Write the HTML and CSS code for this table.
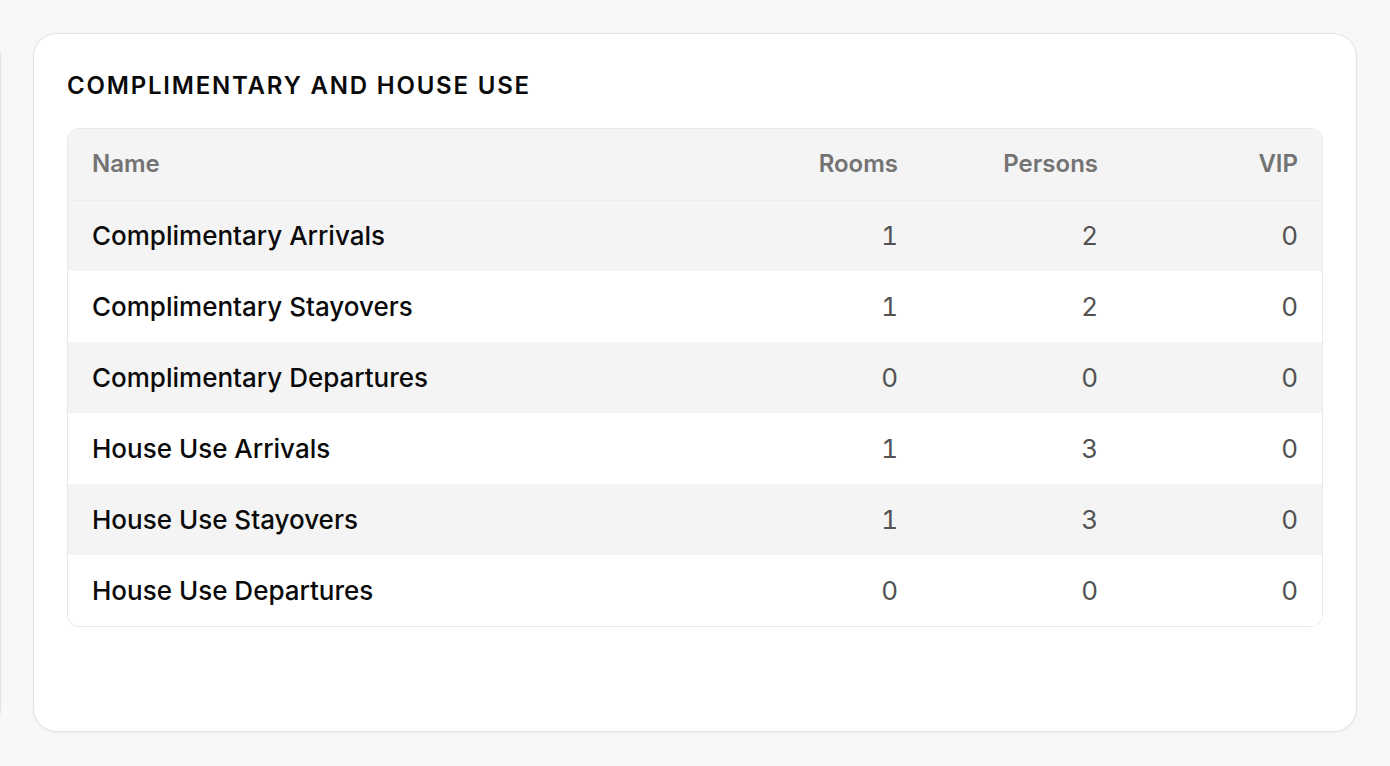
FILE: index.html
```html
<!DOCTYPE html>
<html lang="en">
<head>
<meta charset="utf-8">
<title>Complimentary and House Use</title>
<link rel="stylesheet" href="styles.css">
</head>
<body>
<div class="board">
  <div class="card card-prev" aria-hidden="true"></div>
  <section class="card">
    <h2 class="card-title">COMPLIMENTARY AND HOUSE USE</h2>
    <div class="table-wrap">
      <table class="stats">
        <colgroup>
          <col class="col-name">
          <col class="col-num">
          <col class="col-num">
          <col class="col-num">
        </colgroup>
        <thead>
          <tr>
            <th class="th-name">Name</th>
            <th class="num">Rooms</th>
            <th class="num">Persons</th>
            <th class="num">VIP</th>
          </tr>
        </thead>
        <tbody>
          <tr><td class="name">Complimentary Arrivals</td><td class="num">1</td><td class="num">2</td><td class="num">0</td></tr>
          <tr><td class="name">Complimentary Stayovers</td><td class="num">1</td><td class="num">2</td><td class="num">0</td></tr>
          <tr><td class="name">Complimentary Departures</td><td class="num">0</td><td class="num">0</td><td class="num">0</td></tr>
          <tr><td class="name">House Use Arrivals</td><td class="num">1</td><td class="num">3</td><td class="num">0</td></tr>
          <tr><td class="name">House Use Stayovers</td><td class="num">1</td><td class="num">3</td><td class="num">0</td></tr>
          <tr><td class="name">House Use Departures</td><td class="num">0</td><td class="num">0</td><td class="num">0</td></tr>
        </tbody>
      </table>
    </div>
  </section>
</div>
</body>
</html>
```
FILE: styles.css
```css
* { box-sizing: border-box; }

html, body {
  margin: 0;
  padding: 0;
  background: #f8f8f8;
  font-family: Inter, "Liberation Sans", sans-serif;
  color: #0a0a0a;
  overflow: hidden;
}

.board {
  display: flex;
  gap: 32px;
  padding-top: 33px;
  height: 766px;
}

.card {
  flex: 0 0 1324px;
  height: 699px;
  background: #fff;
  border: 1px solid #e4e4e4;
  border-radius: 24px;
  box-shadow: 0 1px 3px rgba(0, 0, 0, 0.05);
  padding: 36px 33px 32px;
}

.card-prev {
  flex: 0 0 200px;
  margin-left: -199px;
  padding: 0;
}

.card-title {
  margin: 0 0 26px;
  font-size: 24px;
  line-height: 32px;
  font-weight: 600;
  letter-spacing: 0.075em;
  color: #0a0a0a;
}

.table-wrap {
  border: 1px solid #e8e8e8;
  border-radius: 12px;
  overflow: hidden;
}

.stats {
  width: 100%;
  border-collapse: collapse;
  table-layout: fixed;
  font-size: 26px;
  line-height: 32px;
}

.col-num { width: 200px; }

.stats th,
.stats td {
  height: 71px;
  padding: 0 24px;
  vertical-align: middle;
}

.stats thead tr {
  background: #f4f4f4;
  border-bottom: 1px solid #ececec;
}

.stats th {
  font-size: 24px;
  font-weight: 600;
  color: #737373;
  text-align: left;
}

.stats .num { text-align: right; }

.stats tbody tr:nth-child(odd) { background: #f4f4f4; }
.stats tbody tr:nth-child(even) { background: #fff; }

.stats td.name {
  font-weight: 500;
  color: #0a0a0a;
}

.stats td.num {
  font-weight: 400;
  color: #525252;
  font-variant-numeric: tabular-nums;
}
```
